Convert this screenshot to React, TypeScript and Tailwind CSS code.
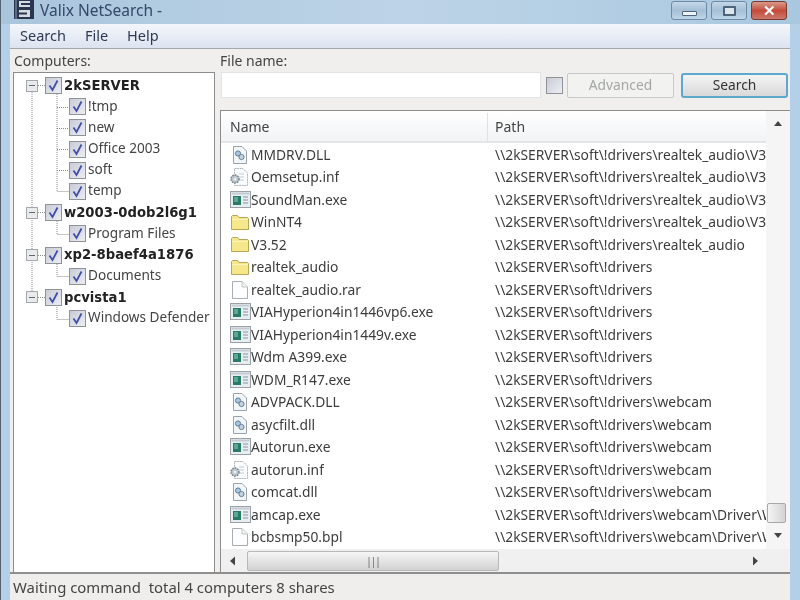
import React from "react";

const F = { fontFamily: '"Noto Sans", "Open Sans", sans-serif' } as React.CSSProperties;

function Check({ on = true }: { on?: boolean }) {
  return (
    <span className="flex h-[17px] w-[17px] shrink-0 items-center justify-center border border-[#8f9299] bg-gradient-to-br from-[#c9ccd6] to-[#eceef3] p-[1px]">
      {on && (
        <svg width="13" height="13" viewBox="0 0 13 13">
          <path d="M2.5 6.5 L5.5 11 L10.5 1.5" fill="none" stroke="#424fa8" strokeWidth="1.8" />
        </svg>
      )}
    </span>
  );
}

function Minus() {
  return (
    <span className="flex h-[12px] w-[12px] shrink-0 items-center justify-center border border-[#a3a7ad] bg-[#e8eaec]">
      <span className="h-[1px] w-[6px] bg-[#666]" />
    </span>
  );
}

type Tree = { name: string; bold?: boolean };
const tree: Tree[] = [
  { name: "2kSERVER", bold: true },
  { name: "!tmp" },
  { name: "new" },
  { name: "Office 2003" },
  { name: "soft" },
  { name: "temp" },
  { name: "w2003-0dob2l6g1", bold: true },
  { name: "Program Files" },
  { name: "xp2-8baef4a1876", bold: true },
  { name: "Documents" },
  { name: "pcvista1", bold: true },
  { name: "Windows Defender" },
];

function TreeLines() {
  const lines = [
    "M18 17 V224",
    "M24 12.5 H31",
    "M24 139.5 H31",
    "M24 182.5 H31",
    "M24 224.5 H31",
    "M43 19 V118.5 H55",
    "M43 34.5 H55",
    "M43 55.5 H55",
    "M43 76.5 H55",
    "M43 97.5 H55",
    "M43 146 V161.5 H55",
    "M43 189 V203.5 H55",
    "M43 232 V246.5 H55",
  ];
  return (
    <svg className="pointer-events-none absolute left-0 top-0" width="70" height="260">
      {lines.map((l, i) => (
        <path key={i} d={l} fill="none" stroke="#8a8a8a" strokeWidth="1" strokeDasharray="1 1" />
      ))}
    </svg>
  );
}

function IconDll() {
  return (
    <svg width="20" height="20" viewBox="0 0 20 20">
      <path d="M3.5 1.5 H12 L16.5 6 V18.5 H3.5 Z" fill="#f3f6f8" stroke="#9aa3ab" />
      <circle cx="8" cy="8.5" r="2.6" fill="#a6c6e4" stroke="#5d7f9f" />
      <circle cx="11.5" cy="12" r="2.6" fill="#c2d2e0" stroke="#6b7f90" />
    </svg>
  );
}
function IconInf() {
  return (
    <svg width="22" height="20" viewBox="0 0 22 20">
      <path d="M5.5 1.5 H14 L18.5 6 V18.5 H5.5 Z" fill="#fbfcfd" stroke="#aeb6bc" strokeDasharray="2 0.6" />
      <path d="M10 7 H15 M10 10 H15 M10 13 H15" stroke="#c4cacf" />
      <circle cx="6" cy="12" r="4" fill="#b9c4cc" stroke="#76838c" strokeWidth="1.4" strokeDasharray="1.6 1" />
      <circle cx="6" cy="12" r="1.5" fill="#eef1f3" />
    </svg>
  );
}
function IconExe() {
  return (
    <svg width="21" height="18" viewBox="0 0 21 18">
      <rect x="0.5" y="0.5" width="20" height="16" fill="#e8edf1" stroke="#9aa2a8" />
      <rect x="1.5" y="1.5" width="18" height="2" fill="#c3ccd4" />
      <rect x="3" y="5" width="8" height="9" fill="#2a7a6a" />
      <rect x="4" y="6" width="4" height="5" fill="#58aa96" />
      <path d="M13 6 H18 M13 9 H18 M13 12 H18" stroke="#8a949b" />
    </svg>
  );
}
function IconFolder() {
  return (
    <svg width="20" height="17" viewBox="0 0 20 17">
      <path d="M1.5 15.5 V2.5 L2.5 1.5 H7.5 L9 3.5 H17.5 L18.5 4.5 V15.5 Z" fill="#f5e78a" stroke="#b5a659" />
      <path d="M2.5 5.5 H17.5" stroke="#fbf4c0" />
    </svg>
  );
}
function IconFile() {
  return (
    <svg width="18" height="20" viewBox="0 0 18 20">
      <path d="M1.5 1.5 H11 L16.5 7 V18.5 H1.5 Z" fill="#fdfdfd" stroke="#a9aeb2" />
      <path d="M11 1.5 V7 H16.5" fill="#eef0f1" stroke="#c3c7ca" />
    </svg>
  );
}

type Kind = "dll" | "inf" | "exe" | "dir" | "file";
const icons: Record<Kind, () => React.JSX.Element> = {
  dll: IconDll,
  inf: IconInf,
  exe: IconExe,
  dir: IconFolder,
  file: IconFile,
};

const A = "\\\\2kSERVER\\soft\\!drivers\\realtek_audio";
const D = "\\\\2kSERVER\\soft\\!drivers";
const W = "\\\\2kSERVER\\soft\\!drivers\\webcam";
const rows: [Kind, string, string][] = [
  ["dll", "MMDRV.DLL", A + "\\V3.52\\WinNT4"],
  ["inf", "Oemsetup.inf", A + "\\V3.52\\WinNT4"],
  ["exe", "SoundMan.exe", A + "\\V3.52\\WinNT4"],
  ["dir", "WinNT4", A + "\\V3.52"],
  ["dir", "V3.52", A],
  ["dir", "realtek_audio", D],
  ["file", "realtek_audio.rar", D],
  ["exe", "VIAHyperion4in1446vp6.exe", D],
  ["exe", "VIAHyperion4in1449v.exe", D],
  ["exe", "Wdm A399.exe", D],
  ["exe", "WDM_R147.exe", D],
  ["dll", "ADVPACK.DLL", W],
  ["dll", "asycfilt.dll", W],
  ["exe", "Autorun.exe", W],
  ["inf", "autorun.inf", W],
  ["dll", "comcat.dll", W],
  ["exe", "amcap.exe", W + "\\Driver\\Win"],
  ["file", "bcbsmp50.bpl", W + "\\Driver\\Win"],
];

function Tri({ dir }: { dir: "up" | "down" | "left" | "right" }) {
  const p = {
    up: "M1 6 L5 1 L9 6 Z",
    down: "M1 2 L9 2 L5 7 Z",
    left: "M7 0.5 V9.5 L2 5 Z",
    right: "M3 0.5 V9.5 L8 5 Z",
  }[dir];
  return (
    <svg width="10" height="10" viewBox="0 0 10 10">
      <path d={p} fill="#444" />
    </svg>
  );
}

function WinBtn({ children, cls }: { children: React.ReactNode; cls: string }) {
  return (
    <div className={`flex h-[19px] w-[36px] items-center justify-center rounded-[3px] border ${cls}`}>
      {children}
    </div>
  );
}

export default function App() {
  return (
    <div style={F} className="flex h-[600px] w-[800px] flex-col overflow-hidden border-l border-[#56626e] bg-[#b4d0e8] blur-[0.5px]">
      {/* title bar */}
      <div className="flex h-[24px] shrink-0 items-start bg-gradient-to-r from-[#a9c5dc] via-[#bdd4e7] to-[#a9c8e0]">
        <svg className="ml-[13px]" width="20" height="19" viewBox="0 0 20 19">
          <rect x="0" y="0" width="20" height="19" fill="#2a3650" />
          <rect x="5" y="1" width="11" height="6" fill="#d4dade" />
          <rect x="5" y="10" width="11" height="7" fill="#d4dade" />
          <rect x="7" y="3" width="9" height="2" fill="#2a3650" />
          <rect x="5" y="12.5" width="8" height="2" fill="#2a3650" />
          <rect x="1" y="0" width="2" height="19" fill="#5b6b80" />
        </svg>
        <span className="ml-[6px] text-[15.5px] leading-[21px] text-[#34486a]">Valix NetSearch -</span>
        <div className="ml-auto mr-[13px] flex gap-[4px] pt-[1px]">
          <WinBtn cls="border-[#6f8aa5] bg-gradient-to-b from-[#c4d8e8] via-[#a5bfd6] to-[#bed6e8]">
            <span className="mt-[5px] h-[5px] w-[15px] rounded-[1px] border border-[#4f6478] bg-[#eef4f8]" />
          </WinBtn>
          <WinBtn cls="border-[#6f8aa5] bg-gradient-to-b from-[#c4d8e8] via-[#a5bfd6] to-[#bed6e8]">
            <span className="h-[10px] w-[13px] rounded-[1px] border-2 border-[#4f6478] bg-[#dbe6ef]" />
          </WinBtn>
          <WinBtn cls="border-[#7a3a30] bg-gradient-to-b from-[#d79a8c] via-[#c44a3a] to-[#c9786a]">
            <span className="text-[15px] font-bold leading-none text-white">✕</span>
          </WinBtn>
        </div>
      </div>

      {/* client */}
      <div className="ml-[9px] mr-[10px] flex min-h-0 flex-1 flex-col bg-[#f0efee]">
        {/* menu */}
        <div className="flex h-[25px] shrink-0 items-center gap-[19px] border-b border-[#a4a9ad] bg-gradient-to-b from-[#f3f6fb] to-[#dde4f0] pl-[10px] text-[14.5px] text-[#2f3a52]">
          <span>Search</span>
          <span>File</span>
          <span>Help</span>
        </div>

        {/* panes */}
        <div className="flex min-h-0 flex-1">
          {/* left */}
          <div className="flex w-[205px] shrink-0 flex-col pl-[3px]">
            <div className="h-[23px] shrink-0 pl-[1px] pt-[2px] text-[14px] leading-[20px] text-[#444]">Computers:</div>
            <div className="relative min-h-0 flex-1 border-l border-r border-t border-[#8c8c8c] bg-white pt-[2px]">
              <TreeLines />
              {tree.map((t) => (
                <div key={t.name} className={`relative flex h-[21.2px] items-center ${t.bold ? "pl-[12px]" : "pl-[55px]"}`}>
                  {t.bold && <Minus />}
                  <span className={t.bold ? "ml-[7px]" : ""}>
                    <Check />
                  </span>
                  {t.bold ? (
                    <span className="ml-[2px] whitespace-nowrap text-[13.2px] font-bold text-[#222]" style={{ fontFamily: '"DejaVu Sans", sans-serif' }}>
                      {t.name}
                    </span>
                  ) : (
                    <span className="ml-[2px] whitespace-nowrap pb-[2px] text-[13.6px] text-[#444]">{t.name}</span>
                  )}
                </div>
              ))}
            </div>
          </div>

          {/* right */}
          <div className="flex min-w-0 flex-1 flex-col pl-[5px]">
            <div className="h-[23px] shrink-0 pt-[2px] text-[14px] leading-[20px] text-[#444]">File name:</div>
            <div className="flex h-[26px] shrink-0 items-center">
              <div className="ml-[1px] h-[26px] w-[320px] border border-[#e2e3e5] bg-white" />
              <span className="ml-[5px]">
                <Check on={false} />
              </span>
              <div className="ml-[4px] flex h-[25px] w-[107px] items-center justify-center rounded-[2px] border border-[#c6c8c9] bg-[#f2f2f1] text-[13.8px] text-[#a4a6a6]">
                Advanced
              </div>
              <div className="ml-[7px] flex h-[25px] w-[107px] items-center justify-center rounded-[3px] border-2 border-[#5da9c9] bg-gradient-to-b from-[#f4f4f4] to-[#d9d9d9] text-[13.8px] text-[#333]">
                Search
              </div>
            </div>

            <div className="mt-[12px] flex min-h-0 flex-1 flex-col border-l border-t border-[#8c8c8c] bg-[#f5f5f5]">
              <div className="flex min-h-0 flex-1">
                <div className="flex min-w-0 flex-1 flex-col overflow-hidden bg-white">
                  {/* header */}
                  <div className="flex h-[32px] shrink-0 items-center border-b-2 border-[#e3e5e7] bg-gradient-to-b from-white to-[#f1f3f5] pt-[2px] text-[14px] text-[#444]">
                    <span className="w-[267px] border-r border-[#dfe2e5] pl-[9px] leading-[28px]">Name</span>
                    <span className="pl-[7px] leading-[28px]">Path</span>
                  </div>
                  {/* rows */}
                  <div className="pt-[2px]">
                    {rows.map(([k, n, p]) => {
                      const I = icons[k];
                      return (
                        <div key={n} className="flex h-[22.5px] items-center text-[13.8px] text-[#3c3c3c]">
                          <div className="flex w-[269px] shrink-0 items-center overflow-hidden whitespace-nowrap">
                            <span className="flex w-[30px] shrink-0 justify-center pb-[3px] pl-[8px]">
                              <I />
                            </span>
                            <span className="truncate pb-[2px]">{n}</span>
                          </div>
                          <span className="overflow-hidden whitespace-nowrap pb-[2px] pl-[5px]">{p}</span>
                        </div>
                      );
                    })}
                  </div>
                </div>
                {/* vertical scrollbar */}
                <div className="flex w-[24px] shrink-0 flex-col items-center bg-[#f5f5f5] pt-[9px]">
                  <Tri dir="up" />
                  <div className="flex-1" />
                  <div className="mb-[8px] mr-[3px] h-[20px] w-[19px] rounded-[2px] border border-[#a8a8a8] bg-gradient-to-r from-[#f4f4f4] to-[#d4d4d4]" />
                  <div className="mb-[8px]">
                    <Tri dir="down" />
                  </div>
                </div>
              </div>
              {/* horizontal scrollbar */}
              <div className="flex h-[23px] shrink-0 items-center bg-[#f0f0f0] pl-[7px] pr-[30px]">
                <Tri dir="left" />
                <div className="ml-[9px] flex h-[20px] w-[252px] items-center justify-center rounded-[2px] border border-[#b8b8b8] bg-gradient-to-b from-[#f6f6f6] to-[#d2d2d2]">
                  <span className="text-[10px] leading-none tracking-[-1px] text-[#666]">|||</span>
                </div>
                <div className="flex-1" />
                <Tri dir="right" />
              </div>
            </div>
          </div>
        </div>

        {/* status */}
        <div className="flex h-[28px] shrink-0 items-center border-t-2 border-[#8e8e8e] bg-[#f0eeed] pl-[3px] pt-[1px] text-[14.9px] text-[#444]">
          Waiting command&nbsp; total 4 computers 8 shares
        </div>
      </div>
    </div>
  );
}
